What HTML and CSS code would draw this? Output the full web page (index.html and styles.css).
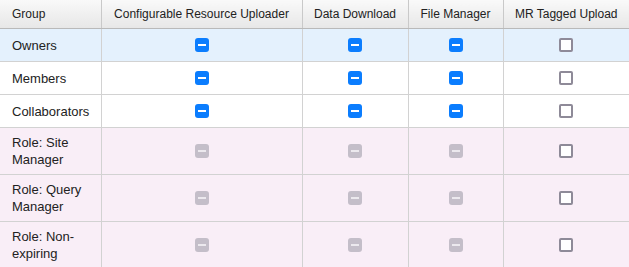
FILE: index.html
```html
<!DOCTYPE html>
<html>
<head>
<meta charset="utf-8">
<link rel="stylesheet" href="styles.css">
</head>
<body>
<table class="perm">
  <colgroup>
    <col class="c-group"><col class="c-cru"><col class="c-dd"><col class="c-fm"><col class="c-mr">
  </colgroup>
  <thead>
    <tr>
      <th class="left">Group</th>
      <th>Configurable Resource Uploader</th>
      <th>Data Download</th>
      <th>File Manager</th>
      <th>MR Tagged Upload</th>
    </tr>
  </thead>
  <tbody>
    <tr class="sel">
      <td class="name">Owners</td>
      <td><span class="cb ind"></span></td>
      <td><span class="cb ind"></span></td>
      <td><span class="cb ind"></span></td>
      <td><span class="cb off"></span></td>
    </tr>
    <tr>
      <td class="name">Members</td>
      <td><span class="cb ind"></span></td>
      <td><span class="cb ind"></span></td>
      <td><span class="cb ind"></span></td>
      <td><span class="cb off"></span></td>
    </tr>
    <tr>
      <td class="name">Collaborators</td>
      <td><span class="cb ind"></span></td>
      <td><span class="cb ind"></span></td>
      <td><span class="cb ind"></span></td>
      <td><span class="cb off"></span></td>
    </tr>
    <tr class="role">
      <td class="name">Role: Site Manager</td>
      <td><span class="cb dis"></span></td>
      <td><span class="cb dis"></span></td>
      <td><span class="cb dis"></span></td>
      <td><span class="cb off"></span></td>
    </tr>
    <tr class="role">
      <td class="name">Role: Query Manager</td>
      <td><span class="cb dis"></span></td>
      <td><span class="cb dis"></span></td>
      <td><span class="cb dis"></span></td>
      <td><span class="cb off"></span></td>
    </tr>
    <tr class="role">
      <td class="name">Role: Non-expiring</td>
      <td><span class="cb dis"></span></td>
      <td><span class="cb dis"></span></td>
      <td><span class="cb dis"></span></td>
      <td><span class="cb off"></span></td>
    </tr>
  </tbody>
</table>
</body>
</html>
```

FILE: styles.css
```css
html, body {
  margin: 0;
  padding: 0;
  background: #fff;
}
.perm {
  border-collapse: collapse;
  table-layout: fixed;
  width: 629px;
  font-family: "Liberation Sans", Arial, sans-serif;
  color: #222;
}
.c-group { width: 101px; }
.c-cru { width: 201px; }
.c-dd { width: 106px; }
.c-fm { width: 95px; }
.c-mr { width: 126px; }

.perm th {
  font-size: 12px;
  font-weight: normal;
  line-height: 15px;
  height: 12px;
  padding: 7px 4px 6px;
  text-align: center;
  white-space: nowrap;
  background: linear-gradient(#f9f9f9, #e7e7e7);
  border-left: 1px solid #c9c9c9;
  border-bottom: 1px solid #b9b9b9;
  color: #222;
}
.perm th.left {
  text-align: left;
  padding-left: 12px;
  border-left: none;
}
.perm td {
  font-size: 13px;
  line-height: 17px;
  padding: 6px 4px;
  text-align: center;
  vertical-align: middle;
  border-left: 1px solid #d2d2d2;
  border-bottom: 1px solid #d2d2d2;
}
.perm td.name {
  text-align: left;
  padding-left: 12px;
  padding-right: 6px;
  border-left: none;
}
.perm tr.sel td { background: #e4f1fd; }
.perm tr.role td { background: #f9eef7; }

.cb {
  display: block;
  width: 14px;
  height: 14px;
  margin: 3px auto;
  box-sizing: border-box;
  border-radius: 3px;
  position: relative;
}
.cb.ind { background: #0b7dfe; }
.cb.dis { background: #c4bec9; }
.cb.ind::after, .cb.dis::after {
  content: "";
  position: absolute;
  left: 3px;
  right: 3px;
  top: 6px;
  height: 2px;
  background: #fff;
}
.cb.dis::after { background: #ece9ee; }
.cb.off {
  background: #fff;
  border: 2px solid #8e8a98;
  border-radius: 2px;
}
```
